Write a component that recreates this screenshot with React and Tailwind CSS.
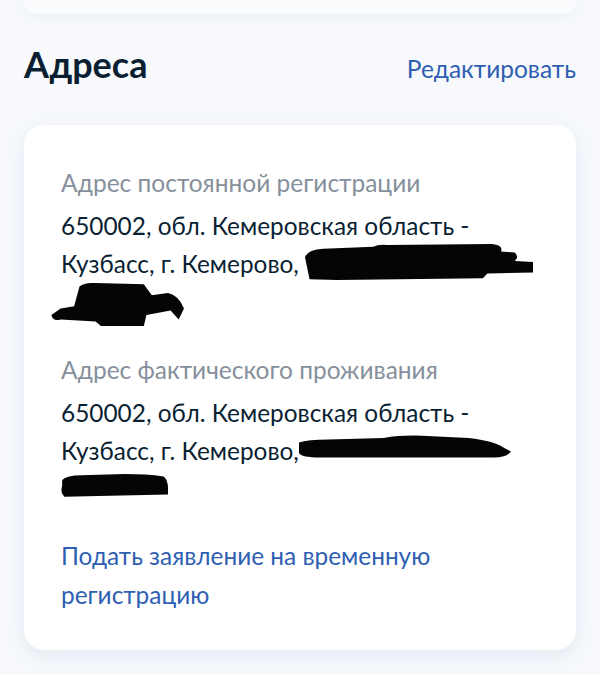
import React from "react";

// закрашенные фрагменты адреса
function Blot({ d, className }) {
  return (
    <svg className={className} viewBox="0 0 100 40" preserveAspectRatio="none" aria-hidden="true">
      <path d={d} fill="#050505" />
    </svg>
  );
}

function AddressBlock({ label, children }) {
  return (
    <div>
      <div className="text-[24.5px] leading-[28px] text-[#86909c]">{label}</div>
      <div className="relative mt-[10px] text-[24.4px] leading-[38px] text-[#0b1f33]">{children}</div>
    </div>
  );
}

export default function App() {
  return (
    <div className="min-h-[675px] bg-[#f7f9fc] font-['Lato','Noto_Sans',sans-serif] overflow-hidden">
      <div className="mx-6 h-[14px] rounded-b-[20px] bg-[#fbfcfe] shadow-[0_4px_12px_rgba(160,175,205,0.1)]" />

      <div className="mx-6 mt-[28px] flex items-baseline justify-between">
        <h2 className="text-[36px] leading-[44px] font-bold text-[#0b1f33]">Адреса</h2>
        <a className="text-[24.5px] leading-[30px] text-[#2f5fb3]">Редактировать</a>
      </div>

      <div className="mx-6 mt-[39px] rounded-[20px] bg-white px-[37px] pt-[44px] pb-[36px] shadow-[0_6px_20px_rgba(150,170,205,0.2)]">
        <AddressBlock label="Адрес постоянной регистрации">
          650002, обл. Кемеровская область -<br />
          Кузбасс, г. Кемерово,<br />
          <span className="invisible">–</span>
          <Blot
            className="absolute left-[244px] top-[37px] h-[38px] w-[228px]"
            d="M0 14 Q1 6 8 5 L30 3 Q32 0 36 1 L82 0 Q87 1 86 8 L92 9 Q94 14 92 18 L100 19 L100 30 L80 31 L78 36 L14 38 L2 37 Z"
          />
          <Blot
            className="absolute left-[-11px] top-[75px] h-[44px] w-[134px]"
            d="M8 34 Q2 36 1 30 L8 24 L18 22 L22 4 Q26 0 34 1 L70 2 L76 12 L88 10 Q96 12 100 24 L96 34 L90 26 L72 30 L70 40 L56 44 L40 42 L34 36 Z"
          />
        </AddressBlock>

        <div className="mt-[35px]">
          <AddressBlock label="Адрес фактического проживания">
            650002, обл. Кемеровская область -<br />
            Кузбасс, г. Кемерово,<br />
            <span className="invisible">–</span>
            <Blot
              className="absolute left-[238px] top-[41px] h-[30px] w-[212px]"
              d="M0 10 Q4 6 14 6 L40 4 Q48 0 58 1 L80 4 Q92 8 96 16 L100 22 Q98 30 92 30 L10 30 Q1 30 0 24 Z"
            />
            <Blot
              className="absolute left-[-1px] top-[80px] h-[24px] w-[108px]"
              d="M2 10 Q6 2 20 2 L60 0 Q80 0 96 4 Q100 10 100 24 L100 34 L4 38 Q0 30 2 20 Z"
            />
          </AddressBlock>
        </div>

        <a className="mt-[28px] block text-[24.4px] leading-[39px] text-[#2f5fb3]">
          Подать заявление на временную
          <br />
          регистрацию
        </a>
      </div>
    </div>
  );
}
